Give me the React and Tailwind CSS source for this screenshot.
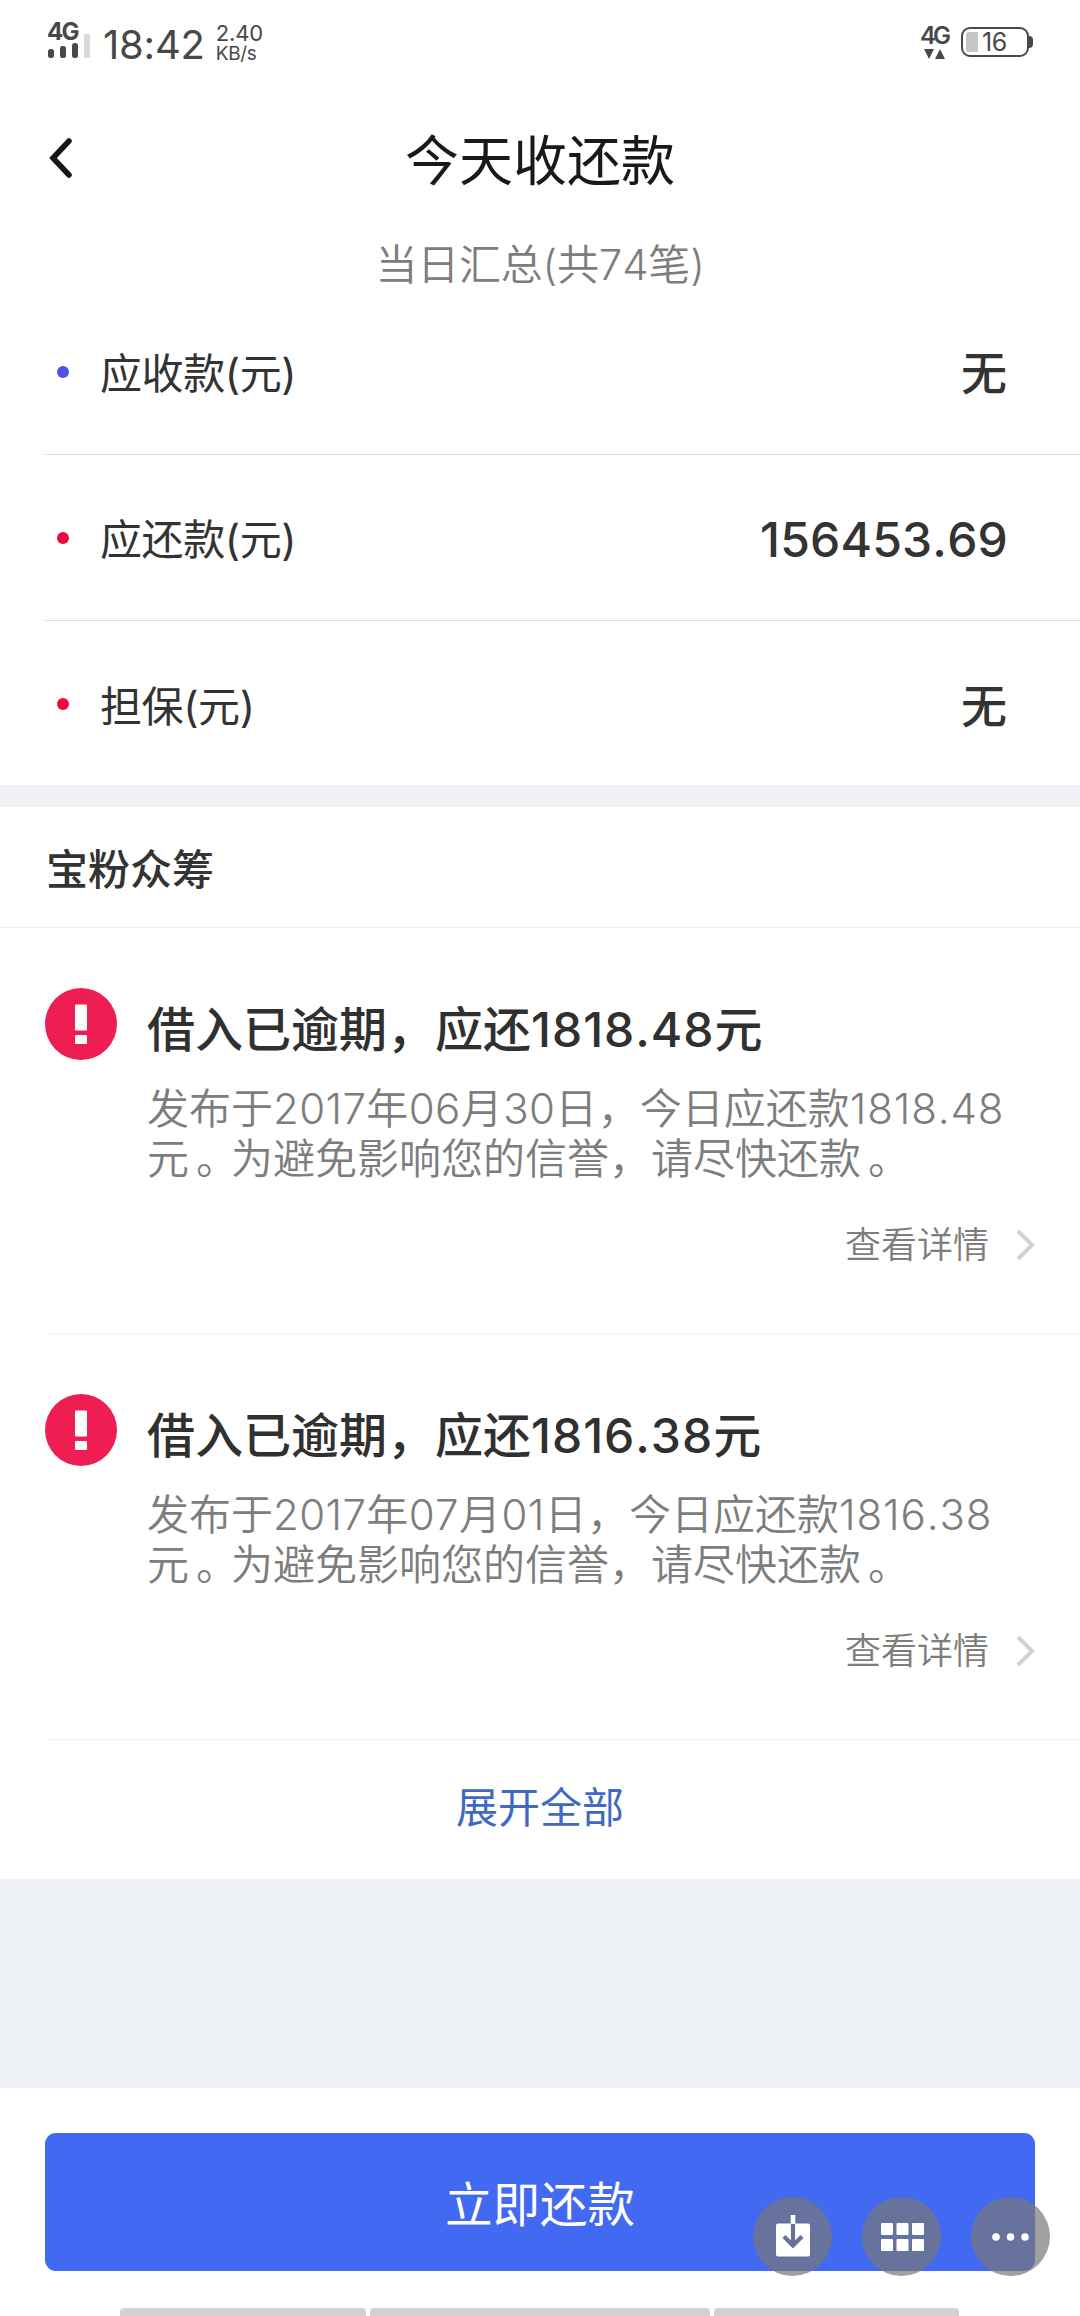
import React from "react";

const summary = [
  { label: "应收款", value: "无", dot: "bg-[#4f52e6]" },
  { label: "应还款", value: "156453.69", dot: "bg-[#f0083c]" },
  { label: "担保", value: "无", dot: "bg-[#f0083c]" },
];

const loans = [
  { id: 1, amount: "1818.48", date: "2017年06月30日" },
  { id: 2, amount: "1816.38", date: "2017年07月01日" },
];

// full stop sits nearer the middle of its cell
function Stop() {
  return <span className="pl-[7px] tracking-[-7px]">。</span>;
}

function StatusBar() {
  return (
    <div className="flex h-[84px] items-start justify-between pl-[47px] pr-[47px] text-[#484848]">
      <div className="flex items-start">
        <div className="flex w-[44px] flex-col pt-[20px]">
          <span className="text-[24px] font-bold leading-[24px] tracking-[-1.8px]">4G</span>
          <svg className="-mt-[10px] ml-px" width="44" height="24" viewBox="0 0 44 24" fill="#484848">
            <rect x="0" y="15" width="6" height="9" rx="2.5" />
            <rect x="12" y="12" width="6" height="12" rx="2.5" />
            <rect x="24" y="9" width="6" height="15" rx="2.5" />
            <rect x="36" y="0" width="6" height="24" rx="1.5" fill="#d9d9d9" />
          </svg>
        </div>
        <span className="ml-[12px] pt-[24px] text-[40px] leading-[41px] tracking-[-0.2px]">18:42</span>
        <div className="ml-[11px] flex flex-col pt-[22px]">
          <span className="text-[22px] leading-[22px] tracking-[-0.2px]">2.40</span>
          <span className="text-[19px] leading-[20px] tracking-[-0.4px]">KB/s</span>
        </div>
      </div>
      <div className="flex items-start">
        <div className="flex w-[40px] flex-col pt-[24px]">
          <span className="-ml-px text-[24px] font-semibold leading-[24px] tracking-[-3px]">4G</span>
          <svg className="ml-[3px] mt-px" width="22" height="10" viewBox="0 0 22 10" fill="#484848">
            <path d="M0 0h10L5 10zM11 10h10L16 0z" />
          </svg>
        </div>
        <div className="mt-[27px] flex items-center">
          <div className="flex h-[30px] w-[68px] items-center rounded-[9px] border-2 border-[#484848] pl-[3px]">
            <div className="h-[20px] w-[12px] rounded-l-[3px] bg-[#c6c6c4]" />
            <span className="ml-[4px] text-[25px] leading-[26px] tracking-[-0.5px]">16</span>
          </div>
          <div className="h-[12px] w-[4px] rounded-r-full bg-[#484848]" />
        </div>
      </div>
    </div>
  );
}

function LoanItem({ loan }) {
  return (
    <div className="ml-[45px] flex h-[406px] border-b border-[#f3f3f3] pt-[60px]">
      <svg className="shrink-0" width="72" height="72" viewBox="0 0 72 72">
        <circle cx="36" cy="36" r="36" fill="#ee1d52" />
        <rect x="30" y="16.5" width="12" height="26" rx="1" fill="#fff" />
        <rect x="30" y="47" width="12" height="9" rx="1" fill="#fff" />
      </svg>
      <div className="flex flex-1 flex-col pl-[30px]">
        <h2 className="mt-[12px] whitespace-nowrap text-[48px] font-[450] leading-[60px] text-[#303030]">
          借入已逾期，应还<span className="tracking-[1px]">{loan.amount}</span>元
        </h2>
        <p className="mt-[24px] whitespace-nowrap text-[42px] font-[350] leading-[50px] text-[#7d7d7d]">
          发布于<span className="tracking-[0.4px]">{loan.date}</span>，今日应还款
          <span className="tracking-[0.9px]">{loan.amount}</span>
          <br />
          元<Stop />为避免影响您的信誉，请尽快还款<Stop />
        </p>
        <a className="mt-[36px] flex items-center justify-end pr-[45px] text-[36px] font-[350] leading-[50px] text-[#7d7d7d]">
          查看详情
          <svg className="ml-[27px]" width="19" height="32" viewBox="0 0 19 32" fill="none">
            <path d="M2 2l14 14L2 30" stroke="#d2d2d2" strokeWidth="4" />
          </svg>
        </a>
      </div>
    </div>
  );
}

function FloatButton({ children }) {
  return (
    <div className="flex h-[79px] w-[79px] items-center justify-center rounded-full bg-[#777777]/70">
      {children}
    </div>
  );
}

export default function App() {
  return (
    <div className="relative flex h-[2316px] w-[1080px] flex-col overflow-hidden bg-white font-['Inter','Noto_Sans_CJK_SC',sans-serif] [font-kerning:none] [font-optical-sizing:none]">
      <StatusBar />

      <header className="grid h-[148px] grid-cols-3 items-center">
        <svg className="ml-[49px]" width="24" height="40" viewBox="0 0 24 40" fill="none">
          <path d="M20 3L4 20l16 17" stroke="#151515" strokeWidth="5.5" strokeLinecap="round" />
        </svg>
        <h1 className="pt-[7px] text-center text-[54px] leading-[60px] text-[#191919]">今天收还款</h1>
      </header>
      <div className="h-[57px] pt-[5px] text-center text-[42px] font-[350] leading-[56px] tracking-[-0.2px] text-[#7d7d7d]">
        当日汇总(共74笔)
      </div>

      <section className="h-[496px] shrink-0">
        {summary.map((row, i) => (
          <div
            key={row.label}
            className={`ml-[45px] flex h-[166px] items-center pr-[72px] text-[#333] ${
              i < summary.length - 1 ? "border-b border-[#dedede]" : ""
            }`}
          >
            <span className={`ml-[12px] h-[12px] w-[12px] rounded-full ${row.dot}`} />
            <span className="ml-[31px] pt-[4px] text-[42px] tracking-[-0.4px]">{row.label}(元)</span>
            <span
              className={`ml-auto pt-[4px] font-[450] ${
                row.value === "无" ? "pr-px text-[46px]" : "text-[48px] tracking-[0.2px]"
              }`}
            >
              {row.value}
            </span>
          </div>
        ))}
      </section>

      <div className="h-[22px] shrink-0 bg-[#efeff4]" />

      <section className="shrink-0">
        <h3 className="flex h-[121px] items-center border-b border-[#ededed] pl-[46px] pt-[5px] text-[42px] font-[450] text-[#333]">
          宝粉众筹
        </h3>
        {loans.map((loan) => (
          <LoanItem key={loan.id} loan={loan} />
        ))}
        <div className="h-[139px] text-center text-[42px] leading-[136px] text-[#4169c4]">展开全部</div>
      </section>

      <div className="h-[209px] shrink-0 bg-[#edf0f4]" />

      <footer className="flex flex-1 flex-col justify-between px-[45px] pt-[45px]">
        <button className="h-[138px] rounded-[11px] bg-[#4169f1] pt-[6px] text-[47.5px] text-white">立即还款</button>
        <div className="ml-[75px] flex gap-[4px]">
          <div className="h-[8px] w-[246px] rounded-t-[4px] bg-[#d2d2d2]" />
          <div className="h-[8px] w-[340px] rounded-t-[4px] bg-[#d2d2d2]" />
          <div className="h-[8px] w-[245px] rounded-t-[4px] bg-[#d2d2d2]" />
        </div>
      </footer>

      {/* floating tools over the pay button */}
      <div className="absolute right-[30px] bottom-[40px] flex gap-[30px]">
        <FloatButton>
          <svg className="-mt-[1px] ml-[1px]" width="34" height="42" viewBox="0 0 34 42" fill="none">
            <rect x="0" y="8.5" width="34" height="33" rx="2" fill="#fff" />
            <path d="M17 0v9" stroke="#fff" strokeWidth="4.6" />
            <path d="M17 9v20M8 21.5l9 9 9-9" stroke="#67719b" strokeWidth="4.2" />
          </svg>
        </FloatButton>
        <FloatButton>
          <svg className="ml-[1px]" width="43" height="28" viewBox="0 0 43 28" fill="#fff">
            {[0, 15.5, 31].map((x) => (
              <React.Fragment key={x}>
                <rect x={x} y="0" width="12" height="12" rx="1" />
                <rect x={x} y="16" width="12" height="12" rx="1" />
              </React.Fragment>
            ))}
          </svg>
        </FloatButton>
        <FloatButton>
          <svg width="37" height="8" viewBox="0 0 37 8" fill="#fff">
            <circle cx="4" cy="4" r="3.8" />
            <circle cx="18.5" cy="4" r="3.8" />
            <circle cx="33" cy="4" r="3.8" />
          </svg>
        </FloatButton>
      </div>
    </div>
  );
}
